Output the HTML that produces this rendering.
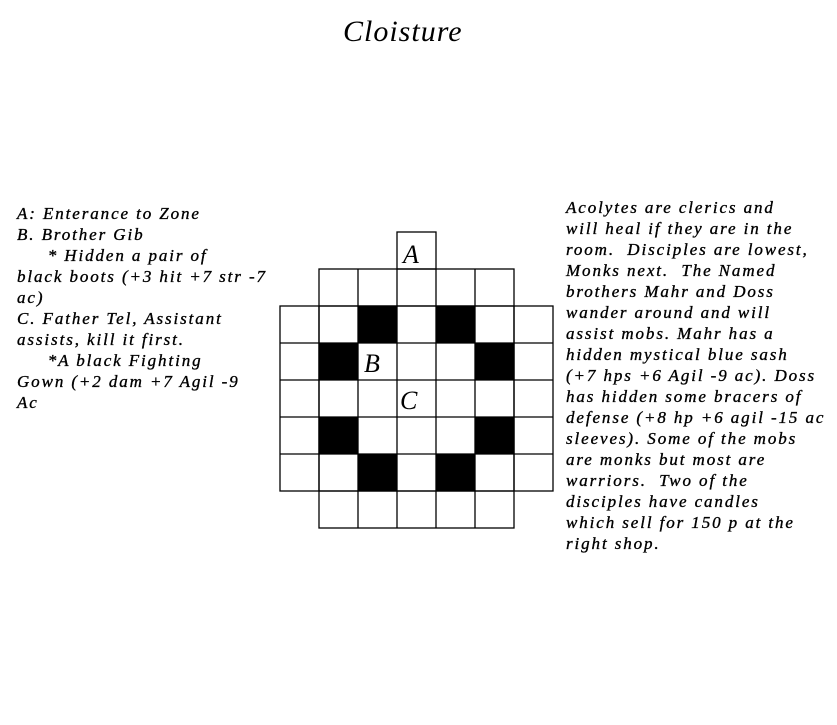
<!DOCTYPE html>
<html><head><meta charset="utf-8"><style>
html,body{margin:0;padding:0;background:#fff;width:837px;height:725px;overflow:hidden;position:relative}
.t{position:absolute;font-family:"Liberation Serif",serif;font-style:italic;color:#000;white-space:pre;font-size:17px;letter-spacing:1.9px;line-height:21px;-webkit-text-stroke:0.35px #000}
</style></head><body>
<div class="t" style="left:343px;top:14px;font-size:30px;letter-spacing:1px;line-height:36px;-webkit-text-stroke:0">Cloisture</div>
<div class="t" style="left:17px;top:203px">A: Enterance to Zone
B. Brother Gib
     * Hidden a pair of
black boots (+3 hit +7 str -7
ac)
C. Father Tel, Assistant
assists, kill it first.
     *A black Fighting
Gown (+2 dam +7 Agil -9
Ac</div>
<div class="t" style="left:566px;top:197px">Acolytes are clerics and
will heal if they are in the
room.  Disciples are lowest,
Monks next.  The Named
brothers Mahr and Doss
wander around and will
assist mobs. Mahr has a
hidden mystical blue sash
(+7 hps +6 Agil -9 ac). Doss
has hidden some bracers of
defense (+8 hp +6 agil -15 ac
sleeves). Some of the mobs
are monks but most are
warriors.  Two of the
disciples have candles
which sell for 150 p at the
right shop.</div>
<svg style="position:absolute;left:0;top:0" width="837" height="725">
<g fill="#000">
<rect x="358" y="306" width="39" height="37"/><rect x="436" y="306" width="39" height="37"/>
<rect x="319" y="343" width="39" height="37"/><rect x="475" y="343" width="39" height="37"/>
<rect x="319" y="417" width="39" height="37"/><rect x="475" y="417" width="39" height="37"/>
<rect x="358" y="454" width="39" height="37"/><rect x="436" y="454" width="39" height="37"/>
</g>
<g stroke="#000" stroke-width="1.3" fill="none">
<rect x="397" y="232" width="39" height="37"/>
<rect x="319" y="269" width="195" height="259"/>
<rect x="280" y="306" width="273" height="185"/>
<line x1="358" y1="269" x2="358" y2="528"/>
<line x1="397" y1="269" x2="397" y2="528"/>
<line x1="436" y1="269" x2="436" y2="528"/>
<line x1="475" y1="269" x2="475" y2="528"/>
<line x1="319" y1="306" x2="319" y2="491"/>
<line x1="514" y1="306" x2="514" y2="491"/>
<line x1="319" y1="306" x2="514" y2="306"/>
<line x1="280" y1="343" x2="553" y2="343"/>
<line x1="280" y1="380" x2="553" y2="380"/>
<line x1="280" y1="417" x2="553" y2="417"/>
<line x1="280" y1="454" x2="553" y2="454"/>
<line x1="319" y1="491" x2="514" y2="491"/>
</g>
<g font-family="Liberation Serif,serif" font-style="italic" font-size="26" fill="#000">
<text x="403" y="263">A</text>
<text x="364" y="372">B</text>
<text x="400" y="409">C</text>
</g>
</svg>
</body></html>
